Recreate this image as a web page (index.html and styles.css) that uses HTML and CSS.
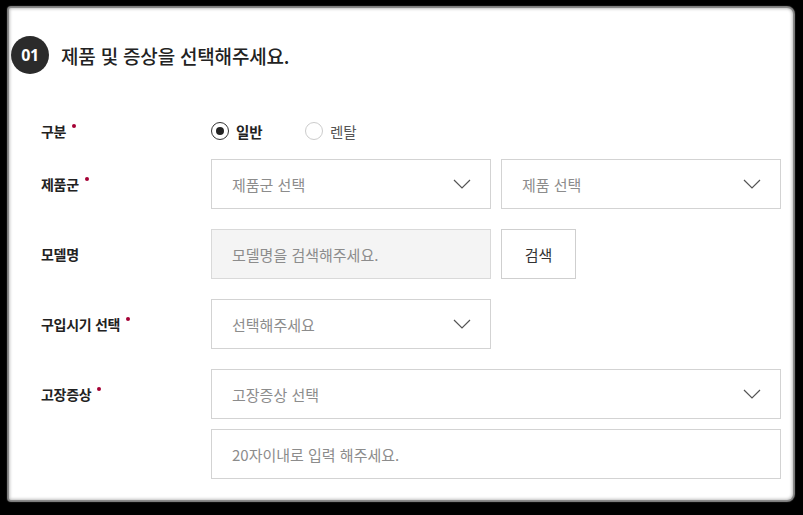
FILE: index.html
```html
<!DOCTYPE html>
<html lang="ko">
<head>
<meta charset="utf-8">
<title>제품 및 증상 선택</title>
<link rel="stylesheet" href="styles.css">
</head>
<body>
<div class="frame">
  <div class="heading">
    <span class="step">01</span>
    <h2 class="title">제품 및 증상을 선택해주세요.</h2>
  </div>

  <div class="row row-radio">
    <div class="label">구분<span class="req"></span></div>
    <div class="fields radios">
      <label class="radio on"><span class="dot"></span>일반</label>
      <label class="radio"><span class="dot"></span>렌탈</label>
    </div>
  </div>

  <div class="row">
    <div class="label">제품군<span class="req"></span></div>
    <div class="fields">
      <div class="select half">제품군 선택<svg class="chev" viewBox="0 0 18 10"><path d="M1 1 L9 9 L17 1"/></svg></div>
      <div class="select half">제품 선택<svg class="chev" viewBox="0 0 18 10"><path d="M1 1 L9 9 L17 1"/></svg></div>
    </div>
  </div>

  <div class="row">
    <div class="label">모델명</div>
    <div class="fields">
      <div class="input half disabled">모델명을 검색해주세요.</div>
      <div class="btn">검색</div>
    </div>
  </div>

  <div class="row">
    <div class="label">구입시기 선택<span class="req"></span></div>
    <div class="fields">
      <div class="select half">선택해주세요<svg class="chev" viewBox="0 0 18 10"><path d="M1 1 L9 9 L17 1"/></svg></div>
    </div>
  </div>

  <div class="row">
    <div class="label">고장증상<span class="req"></span></div>
    <div class="fields col">
      <div class="select full">고장증상 선택<svg class="chev" viewBox="0 0 18 10"><path d="M1 1 L9 9 L17 1"/></svg></div>
      <div class="input full">20자이내로 입력 해주세요.</div>
    </div>
  </div>
</div>
</body>
</html>
```

FILE: styles.css
```css
* { box-sizing: border-box; }
html, body { margin: 0; padding: 0; }
body {
  background: #000;
  width: 803px;
  height: 515px;
  overflow: hidden;
  font-family: "Noto Sans CJK KR", "Noto Sans", sans-serif;
  color: #222;
  padding: 8px 10px 15px 9px;
}
.frame {
  background: #fff;
  width: 784px;
  height: 492px;
  border-radius: 2px 6px 6px 2px;
  box-shadow: 0 0 1px 2px #8a8a8a, inset 0 0 3px 1px rgba(0,0,0,0.25);
  padding: 28px 12px 0 32px;
}
.heading {
  display: flex;
  align-items: center;
  margin-left: -30px;
  height: 38px;
}
.step {
  flex-shrink: 0;
  width: 38px;
  height: 38px;
  border-radius: 50%;
  background: #2b2b2b;
  color: #fff;
  font-family: "Noto Sans", sans-serif;
  font-weight: 700;
  font-size: 16px;
  display: flex;
  align-items: center;
  justify-content: center;
  letter-spacing: -0.5px;
}
.title {
  margin: 0 0 0 12px;
  font-size: 19px;
  font-weight: 500;
  color: #222;
  letter-spacing: -0.2px;
}
.row {
  display: flex;
  align-items: flex-start;
  margin-bottom: 20px;
}
.row-radio {
  margin-top: 42px;
  margin-bottom: 13px;
  height: 30px;
  align-items: center;
}
.label {
  flex-shrink: 0;
  width: 170px;
  height: 50px;
  display: flex;
  align-items: center;
  font-size: 14px;
  font-weight: 700;
  color: #222;
  letter-spacing: -0.3px;
}
.row-radio .label { height: 30px; }
.req {
  width: 4px;
  height: 4px;
  border-radius: 50%;
  background: #a50034;
  margin-left: 6px;
  align-self: center;
  transform: translateY(-5px);
}
.fields {
  display: flex;
  gap: 10px;
  width: 570px;
  flex-shrink: 0;
}
.fields.col { flex-direction: column; }
.radios { gap: 0; align-items: center; }
.radio {
  display: flex;
  align-items: center;
  font-size: 14.5px;
  width: 94px;
  color: #555;
}
.radio .dot {
  width: 18px;
  height: 18px;
  border-radius: 50%;
  border: 1px solid #ccc;
  margin-right: 7px;
  position: relative;
}
.radio.on { color: #222; font-weight: 700; }
.radio.on .dot { border: 1.5px solid #333; }
.radio.on .dot::after {
  content: "";
  position: absolute;
  left: 50%;
  top: 50%;
  width: 8px;
  height: 8px;
  margin: -4px 0 0 -4px;
  border-radius: 50%;
  background: #222;
}
.select, .input {
  height: 50px;
  border: 1px solid #d3d3d3;
  display: flex;
  align-items: center;
  justify-content: space-between;
  padding: 0 19px 0 20px;
  font-size: 15px;
  color: #8c8c8c;
  letter-spacing: 0;
}
.half { width: 280px; }
.full { width: 570px; }
.disabled { background: #f4f4f4; border-color: #d9d9d9; }
.chev {
  width: 18px;
  height: 10px;
  fill: none;
  stroke: #555;
  stroke-width: 1.2;
}
.btn {
  width: 75px;
  height: 50px;
  border: 1px solid #cfcfcf;
  display: flex;
  align-items: center;
  justify-content: center;
  font-size: 15px;
  color: #333;
}
```
